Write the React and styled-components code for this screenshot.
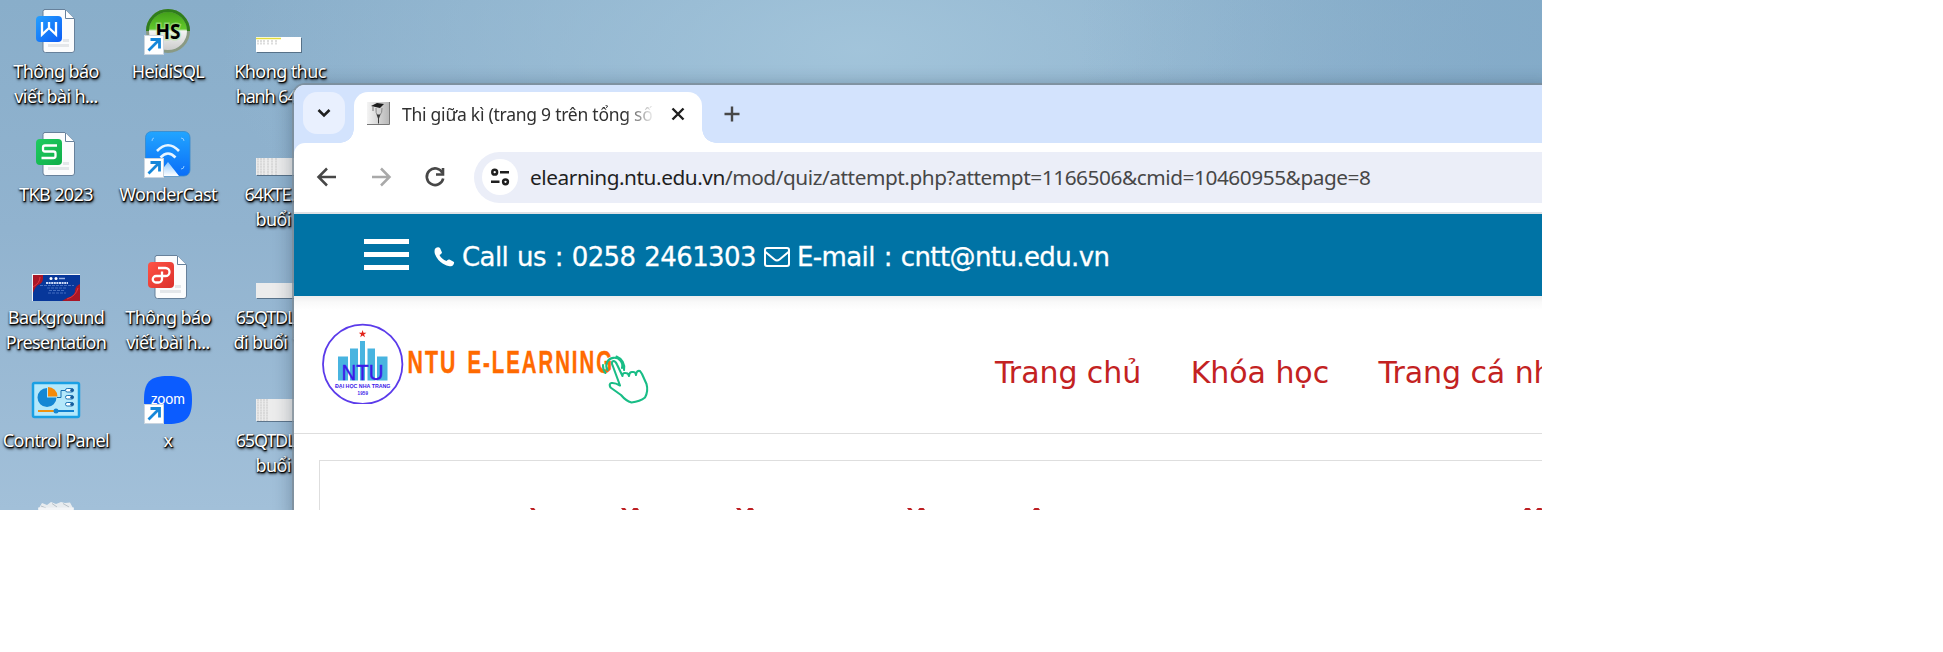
import React from 'react';
import styled, { createGlobalStyle } from 'styled-components';

const Global = createGlobalStyle`
  * { box-sizing: border-box; }
  body { margin: 0; background: #fff; font-family: "Noto Sans", "Open Sans", sans-serif; }
`;

const Desktop = styled.main`
  position: relative;
  width: 1542px;
  height: 510px;
  overflow: hidden;
  background:
    linear-gradient(90deg, rgba(130,170,200,0) 70%, rgba(130,170,200,.8) 100%),
    radial-gradient(ellipse 640px 280px at 860px 50px, rgba(163,197,219,.95), rgba(163,197,219,0)),
    linear-gradient(180deg, #89aeca 0, #91b3cf 45%, #a2c0d9 100%);
`;

const IconGrid = styled.div`
  display: grid;
  grid-template-columns: repeat(3, 112px);
  grid-template-rows: repeat(5, 123px);
`;

const Shortcut = styled.div`
  display: flex;
  flex-direction: column;
  align-items: center;
  padding-top: 6px;
  min-width: 0;
  svg { display: block; flex: none; overflow: visible; }
`;

const Label = styled.div`
  margin-top: 5px;
  color: #fff;
  font-size: 18px;
  line-height: 25px;
  letter-spacing: -0.6px;
  text-align: center;
  white-space: pre;
  text-shadow: 1px 1px 1px #000, 0 1px 2px #000, 1px 2px 3px rgba(0,0,0,.8);
`;

const LabelLine = styled.div`
  letter-spacing: ${(p) => (p.$tight ? -1.2 : -0.6)}px;
`;

const Browser = styled.section`
  position: absolute;
  left: 294px;
  top: 85px;
  width: 1260px;
  height: 440px;
  background: #fff;
  border-top-left-radius: 11px;
  box-shadow: 0 0 0 2px rgba(125,140,152,.75), 0 2px 20px rgba(20,40,60,.4);
`;

const TabStrip = styled.header`
  display: flex;
  height: 58px;
  padding: 7px 0 0 9px;
  background: #d3e3fd;
  border-top-left-radius: 11px;
`;

const TabSearch = styled.div`
  display: grid;
  place-items: center;
  width: 42px;
  height: 42px;
  border-radius: 14px;
  background: #e9f0fe;
`;

const Tab = styled.div`
  position: relative;
  display: flex;
  align-items: center;
  width: 348px;
  height: 51px;
  margin-left: 9px;
  padding: 0 15px 8px 13px;
  background: #fff;
  border-radius: 14px 14px 0 0;
  &::before, &::after {
    content: "";
    position: absolute;
    bottom: 0;
    width: 14px;
    height: 14px;
  }
  &::before { right: 100%; background: radial-gradient(circle at 0 0, transparent 13.5px, #fff 14px); }
  &::after { left: 100%; background: radial-gradient(circle at 100% 0, transparent 13.5px, #fff 14px); }
`;

const TabTitle = styled.span`
  width: 253px;
  margin: 1px 0 0 12px;
  overflow: hidden;
  white-space: nowrap;
  font-size: 17.5px;
  line-height: 28px;
  letter-spacing: -0.25px;
  color: #303030;
  mask-image: linear-gradient(90deg, #000 88%, transparent 100%);
`;

const CloseIcon = styled.svg`
  flex: none;
  margin-left: 16px;
`;

const NewTab = styled.div`
  margin: 13px 0 0 22px;
`;

const Toolbar = styled.div`
  display: flex;
  align-items: center;
  height: 71px;
  padding: 0 0 1px 19px;
  background: #fff;
  border-bottom: 2px solid #dfe1e5;
  border-top-left-radius: 11px;
`;

const ToolbarEdge = styled.div`
  background: #d3e3fd;
`;

const NavIcons = styled.div`
  display: flex;
  gap: 26px;
  width: 161px;
`;

const AddressBar = styled.div`
  display: flex;
  align-items: center;
  flex: 1;
  height: 51px;
  padding-left: 8px;
  border-radius: 26px 0 0 26px;
  background: #ebeef8;
`;

const SiteInfo = styled.div`
  display: grid;
  place-items: center;
  width: 36px;
  height: 36px;
  border-radius: 50%;
  background: #fff;
`;

const Url = styled.span`
  margin-left: 12px;
  white-space: nowrap;
  font-size: 20.8px;
  letter-spacing: -0.44px;
  color: #474747;
  b { font-weight: 400; color: #1f1f1f; }
`;

const ContactBar = styled.div`
  display: flex;
  align-items: center;
  height: 82px;
  padding-left: 70px;
  background: #0073a5;
  color: #fff;
  font-family: "DejaVu Sans", sans-serif;
  font-size: 26px;
  white-space: pre;
`;

const Burger = styled.div`
  display: flex;
  flex-direction: column;
  gap: 8px;
  width: 45px;
  margin: 0 25px 1px 0;
  i { height: 5px; background: #fff; }
`;

const Contact = styled.span`
  display: flex;
  align-items: center;
  margin-top: 3px;
  margin-right: ${(p) => p.$after ?? 0}px;
  letter-spacing: -0.6px;
  word-spacing: 1.2px;
  -webkit-text-stroke: 0.3px #fff;
  svg { margin-right: ${(p) => p.$iconGap}px; }
`;

const SiteHeader = styled.div`
  display: flex;
  height: 138px;
  border-bottom: 1px solid #dedede;
  background: linear-gradient(180deg, #ededed 0, #f9f9f9 6px, #fff 14px);
`;

const Logo = styled.svg`
  display: block;
  flex: none;
  margin: 24px 0 0 26px;
`;

const SiteNav = styled.nav`
  display: flex;
  margin: 59px 0 0 345px;
  gap: 49.5px;
  font-family: "DejaVu Sans", sans-serif;
  font-size: 30px;
  line-height: 36px;
  letter-spacing: -0.06px;
  color: #c32222;
  white-space: nowrap;
`;

const QuizCard = styled.div`
  margin: 26px 0 0 25px;
  height: 90px;
  border: 1px solid #dedede;
  svg { display: block; margin-top: 46px; }
`;

const Arrow = () => (
  <g>
    <rect x="0.500" y="26.500" width="19" height="19" fill="#fff" stroke="#cbd5df" strokeWidth="1" />
    <path d="M4.500 41.500 L15 31 M6.500 30.500 H15.500 V39.500" stroke="#1687d9" strokeWidth="2.800" fill="none" />
  </g>
);

const DocIcon = ({ color, id, light, children }) => (
  <svg width="48" height="48" viewBox="0 0 48 48">
    <defs>
      <linearGradient id={id} x1="0" y1="0" x2="1" y2="1">
        <stop offset="0" stopColor={light} /><stop offset="1" stopColor={color} />
      </linearGradient>
    </defs>
    <path d="M12 3.500 H33 L42.500 13 V44 a2.500 2.500 0 0 1 -2.500 2.500 H13.500 A2.500 2.500 0 0 1 11 44 V5.500 A2 2 0 0 1 13 3.500 Z" fill="#fbfcfd" stroke="#67819b" />
    <path d="M33.500 4 V12.500 H42" fill="#fff" stroke="#67819b" />
    <path d="M31 34.500 H37 M16 39.500 H37" stroke="#e4e7ea" strokeWidth="3" />
    <rect x="4" y="10" width="26" height="26" rx="4" fill={`url(#${id})`} />
    <g fill="none" stroke="#fff" strokeWidth="2.300">{children}</g>
  </svg>
);

const Writer = () => (
  <DocIcon id="wr" light="#24a0ff" color="#0c5cf5">
    <path d="M10 16 V28.500 L17 22 L24 28.500 V16 M17 16 V22" />
  </DocIcon>
);
const Sheet = () => (
  <DocIcon id="sh" light="#1fcb60" color="#0fae49">
    <path d="M25 16.500 H13 a2 2 0 0 0 -2 2 v2 a2 2 0 0 0 2 2 H21.500 a2 2 0 0 1 2 2 v2.500 a2 2 0 0 1 -2 2 H9.500" />
  </DocIcon>
);
const Pdf = () => (
  <DocIcon id="pd" light="#ff5346" color="#db302b">
    <path d="M14 16 H21.500 a4 4 0 0 1 0 8 H12 a3.200 3.200 0 0 0 0 6.500 H14.500 a3.500 3.500 0 0 0 3.500 -3.500 V19.500" />
  </DocIcon>
);

const Heidi = () => (
  <svg width="48" height="48" viewBox="0 0 48 48">
    <defs>
      <linearGradient id="hg" x1="0" y1="0" x2="0" y2="1">
        <stop offset="0" stopColor="#3f9c17" /><stop offset=".45" stopColor="#62c92c" />
        <stop offset=".5" stopColor="#f4f4f4" /><stop offset="1" stopColor="#c9c9c9" />
      </linearGradient>
    </defs>
    <circle cx="24" cy="25" r="20.500" fill="url(#hg)" stroke="#8a9a84" strokeWidth="3" />
    <path d="M3.500 25 a20.500 20.500 0 0 1 41 0" fill="none" stroke="#2f7e1c" strokeWidth="3" />
    <text x="24" y="32.500" textAnchor="middle" textLength="25" lengthAdjust="spacingAndGlyphs" fontFamily="Open Sans" fontWeight="700" fontSize="22" stroke="#b9e7a0" strokeWidth="3" paintOrder="stroke" strokeOpacity=".6">HS</text>
    <g transform="translate(0 3)"><Arrow /></g>
  </svg>
);

const Cast = () => (
  <svg width="48" height="48" viewBox="0 0 48 48">
    <defs>
      <linearGradient id="wc" x1="0" y1="0" x2="0" y2="1"><stop offset="0" stopColor="#22a5ff" /><stop offset="1" stopColor="#0a6ef8" /></linearGradient>
      <linearGradient id="wb" x1="0" y1="0" x2="0" y2="1"><stop offset="0" stopColor="#8cc8ff" /><stop offset="1" stopColor="#fff" /></linearGradient>
    </defs>
    <rect x="1.500" y="2.500" width="44.500" height="44.500" rx="6" fill="url(#wc)" stroke="#3589cc" strokeWidth=".8" />
    <path d="M24 33 L35 47 H13 Z" fill="url(#wb)" />
    <g fill="none" stroke="#e8f5ff" strokeWidth="2.600"><path d="M13 22 Q24 10.500 35 22" /><path d="M16.500 28.500 Q24 20.500 31.500 28.500" /></g>
    <path d="M8 12 q0 -3 2 -3 M37 9 q3 0 3 3 M37 40 q3 0 3 -3" stroke="#90ccff" fill="none" />
    <g transform="translate(0 3)"><Arrow /></g>
  </svg>
);

const Zoom = () => (
  <svg width="48" height="48" viewBox="0 0 48 48">
    <path d="M24 1 C42 1 48 7 48 25 S42 49 24 49 S0 43 0 25 S6 1 24 1 Z" fill="#0b5cff" />
    <text x="24" y="28.500" textAnchor="middle" textLength="34" lengthAdjust="spacingAndGlyphs" fontFamily="Lato" fontSize="14.500" fill="#fff">zoom</text>
    <g transform="translate(0 3)"><Arrow /></g>
  </svg>
);

const ControlPanel = () => (
  <svg width="48" height="48" viewBox="0 -1 48 48">
    <rect x="1" y="7" width="46" height="34" rx="1.500" fill="#b4e8fb" stroke="#1aa0e4" strokeWidth="2.500" />
    <path d="M15 12 A9.500 9.500 0 1 0 24.500 21.500 H15 Z" fill="#1487d4" />
    <path d="M16 11 a9.500 9.500 0 0 1 9.500 9.500 H16 Z" fill="#f58a0a" />
    <path d="M25 21.500 h4 v-7 h4" stroke="#176eb0" fill="none" />
    <g fill="#fff" stroke="#1b74b5"><rect x="33.500" y="12.500" width="8" height="3.500" rx="1.700" /><rect x="33.500" y="19.500" width="8" height="3.500" rx="1.700" /><rect x="33.500" y="26.500" width="8" height="3.500" rx="1.700" /></g>
    <g fill="#155c9c"><circle cx="40" cy="14.200" r="1.700" /><circle cx="40" cy="21.200" r="1.700" /><circle cx="40" cy="28.200" r="1.700" /></g>
    <path d="M6 35 H22" stroke="#ef910e" strokeWidth="2" /><path d="M25 35 H42" stroke="#1080d0" strokeWidth="2" />
    <circle cx="24" cy="35" r="2.500" fill="#1487d4" />
  </svg>
);

const Poster = () => (
  <svg width="48" height="48" viewBox="0 -4 48 48">
    <rect x="0" y="18" width="48" height="27" fill="#f2f4f8" />
    <rect x="1" y="19" width="47" height="26" fill="#07379a" />
    <path d="M1 19 h10 q1 8 -5 10 q-3 2 -5 8 Z M48 28 q-5 2 -5 7 t-8 7 l-5 3 H48 Z" fill="#a91626" />
    <path d="M8 21 q0 6 -7 10 M46 32 q-2 8 -11 11" stroke="#e13743" fill="none" />
    <circle cx="19" cy="22.500" r="1.500" fill="#fff" /><circle cx="24" cy="22.500" r="1.500" fill="#fff" />
    <path d="M27 22.500 h6" stroke="#9eb5e6" strokeWidth="1.500" />
    <path d="M14 27 h22" stroke="#cfdcf8" strokeWidth="2" strokeDasharray="2 .6" />
    <path d="M8 29.500 h34 M15 32 h20 M17 34.500 h16 M16 37 h18" stroke="#6f93dc" strokeWidth=".6" strokeDasharray="3 1" />
  </svg>
);

const Thumb = ({ y, h, yellow, cols = [2, 5, 8, 12, 16, 20] }) => (
  <svg width="48" height="48" viewBox="0 0 48 48">
    <rect x="1" y={y + 1} width="45" height={h} fill="rgba(50,70,90,.6)" />
    <rect x="0" y={y} width="45" height={h} fill={yellow ? '#fff' : '#ececec'} />
    {yellow && <path d={`M0 ${y + 1.500} H25`} stroke="#e3dc3c" strokeWidth="1.500" />}
    <path d={cols.map((x) => `M${x} ${y + (yellow ? 3 : 0)} V${y + (yellow ? 8 : h)}`).join(' ')} stroke="#d2d2d2" strokeWidth="1.500" strokeDasharray="2 .6" />
  </svg>
);

const Bin = () => (
  <svg width="48" height="48" viewBox="0 0 48 48">
    <path d="M7 10 L10 5 L15 7 L19 4 L24 6 L29 4 L33 5 L38 4.500 L41 10 V20 H7 Z" fill="#e8ecef" />
    <path d="M9 8 L14 10 M20 5.500 L25 9 M31 5.500 L37 9" stroke="#b8c1c8" fill="none" />
    <path d="M6 9.500 H42 L40 47 H8 Z" fill="#f5f7f8" opacity=".85" />
  </svg>
);

const shortcuts = [
  { Icon: Writer, lines: ['Thông báo', 'viết bài h...'] },
  { Icon: Heidi, lines: ['HeidiSQL'] },
  { Icon: () => <Thumb y={31} h={15} yellow />, lines: ['Khong thuc', 'hanh 64K.....'], tight: 1 },
  { Icon: Sheet, lines: ['TKB 2023'] },
  { Icon: Cast, lines: ['WonderCast'] },
  { Icon: () => <Thumb y={29} h={17} />, lines: ['64KTE.......', 'buổi 2'], tight: 0 },
  { Icon: Poster, lines: ['Background', 'Presentation'] },
  { Icon: Pdf, lines: ['Thông báo', 'viết bài h...'] },
  { Icon: () => <Thumb y={31} h={15} cols={[]} />, lines: ['65QTDL........', 'đi buổi 1......'], tight: 0 },
  { Icon: ControlPanel, lines: ['Control Panel'] },
  { Icon: Zoom, lines: ['x'] },
  { Icon: () => <Thumb y={24} h={22} cols={[2, 5, 8, 11]} />, lines: ['65QTDL........', 'buổi 2'], tight: 0 },
  { Icon: Bin, lines: [] },
];

const Favicon = () => (
  <svg width="23" height="23" viewBox="0 0 23 23">
    <defs><linearGradient id="fv"><stop offset="0" stopColor="#f4f4f4" /><stop offset="1" stopColor="#b8b8b8" /></linearGradient></defs>
    <path d="M0 22.500 H22.500 V0" fill="none" stroke="#777" />
    <rect width="22" height="22" fill="url(#fv)" />
    <path d="M4 4 L10 1 L17 2 L13 6 Z" fill="#1d1d1d" /><path d="M6 4 V9" stroke="#777" />
    <path d="M9 6 Q8.500 11 10.500 13.500 M15 6 Q15.500 11 12.500 13.500" stroke="#888" fill="none" />
    <path d="M9.500 12.500 h4 l-1.500 4 v5 h-1 v-5 Z" fill="#3a3a3a" />
  </svg>
);

const BrandLogo = () => (
  <Logo width="330" height="84" viewBox="320 320 330 84">
    <circle cx="362.700" cy="364.300" r="39.700" fill="#fff" stroke="#5b3bea" strokeWidth="1.800" />
    <path d="M362.600 330 l.9 2.700 h2.900 l-2.300 1.800 .9 2.800 -2.400 -1.700 -2.400 1.700 .9 -2.800 -2.300 -1.800 h2.900 Z" fill="#e2231a" />
    <path d="M338 356.500 h10 V380.500 h-10 Z M350 348.500 h8 V380.500 h-8 Z M360 341 h5 V380.500 h-5 Z M367.500 348.500 h7.500 V380.500 h-7.500 Z M377 356.500 h10.500 V380.500 h-10.500 Z" fill="#48b4e0" />
    <g fontFamily="Liberation Sans" fill="#3c19e8">
      <text x="341.500" y="380" fontSize="22" stroke="#3c19e8" strokeWidth=".4" textLength="42" lengthAdjust="spacingAndGlyphs">NTU</text>
      <text x="335" y="388" fontSize="5.500" fontWeight="700" textLength="55.500" lengthAdjust="spacingAndGlyphs">ĐẠI HỌC NHA TRANG</text>
      <text x="357.500" y="395" fontSize="4.500" fontWeight="700" textLength="10.500">1959</text>
    </g>
    <g fontFamily="Liberation Sans" fontWeight="700" fontSize="31" fill="#ff6a00" letterSpacing="3" stroke="#ff6a00" strokeWidth=".4">
      <text x="407.500" y="372.500" textLength="50" lengthAdjust="spacingAndGlyphs">NTU</text>
      <text x="467.500" y="372.500" textLength="146.500" lengthAdjust="spacingAndGlyphs">E-LEARNING</text>
    </g>
    <g fill="none" stroke="#19bd86" strokeWidth="2.100" strokeLinejoin="round" strokeLinecap="round">
      <path d="M613 366.500 Q610.500 361.500 613.500 361 Q615.500 361 617 364.500 L622.500 376 Q622.500 372.500 625.500 373 Q628.500 373 629 376 Q629.500 371.500 632.500 372 Q635.500 371.500 636 375 Q636.500 370 640 371 L642 374 L646.500 384 Q648.500 391 645 397.500 Q640 401.500 631.500 402.500 Q626 401 621 395 L610.500 387.500 Q608.500 383.500 611.500 383 Q615 382.500 620 385.500 Z" />
      <path d="M607.500 370 A8 8 0 1 1 622 368 M605.500 373 A12 12 0 0 1 603 365 M616.500 356.500 A12 12 0 0 1 624 370" />
    </g>
  </Logo>
);

export default function App() {
  return (
    <>
      <Global />
      <Desktop>
        <IconGrid>
          {shortcuts.map(({ Icon, lines, tight }, i) => (
            <Shortcut key={i}>
              <Icon />
              <Label>{lines.map((line, n) => <LabelLine key={n} $tight={tight === n}>{line}</LabelLine>)}</Label>
            </Shortcut>
          ))}
        </IconGrid>
        <Browser>
          <TabStrip>
            <TabSearch>
              <svg width="14" height="10" viewBox="0 0 14 10"><path d="M1.500 2 L7 7.500 L12.500 2" fill="none" stroke="#1f1f1f" strokeWidth="2.600" /></svg>
            </TabSearch>
            <Tab>
              <Favicon />
              <TabTitle>Thi giữa kì (trang 9 trên tổng số</TabTitle>
              <CloseIcon width="14" height="14" viewBox="0 0 14 14"><path d="M1.500 1.500 L12.500 12.500 M12.500 1.500 L1.500 12.500" stroke="#1f1f1f" strokeWidth="2.400" /></CloseIcon>
            </Tab>
            <NewTab>
              <svg width="16" height="16" viewBox="0 0 16 16"><path d="M8 .5 V15.500 M.5 8 H15.500" stroke="#474747" strokeWidth="2.400" /></svg>
            </NewTab>
          </TabStrip>
          <ToolbarEdge>
            <Toolbar>
              <NavIcons>
                <svg width="28" height="28" viewBox="0 0 28 28"><path d="M23 14 H6 M14 5.500 L5.500 14 L14 22.500" fill="none" stroke="#474747" strokeWidth="2.500" /></svg>
                <svg width="28" height="28" viewBox="0 0 28 28"><path d="M5 14 H22 M14 5.500 L22.500 14 L14 22.500" fill="none" stroke="#a9a9a9" strokeWidth="2.500" /></svg>
                <svg width="28" height="28" viewBox="0 0 28 28"><path d="M21.500 10 A8.300 8.300 0 1 0 22.200 15.500" fill="none" stroke="#474747" strokeWidth="2.600" /><path d="M22 5 V11.500 H15" fill="none" stroke="#474747" strokeWidth="2.600" /></svg>
              </NavIcons>
              <AddressBar>
                <SiteInfo>
                  <svg width="20" height="18" viewBox="0 0 20 18"><g fill="none" stroke="#1f1f1f" strokeWidth="2.500"><circle cx="4.700" cy="4.200" r="2.400" /><path d="M10 4.200 H19 M1 13.800 H9.500" /><circle cx="15.500" cy="13.800" r="2.400" /></g></svg>
                </SiteInfo>
                <Url><b>elearning.ntu.edu.vn</b>/mod/quiz/attempt.php?attempt=1166506&amp;cmid=10460955&amp;page=8</Url>
              </AddressBar>
            </Toolbar>
          </ToolbarEdge>
          <ContactBar>
            <Burger><i /><i /><i /></Burger>
            <Contact $after={8} $iconGap={7}>
              <svg width="21" height="20" viewBox="0 0 21 20"><path d="M1 1.800 Q4 -.7 6 1 L8 5.500 Q7.500 7 5.500 8 Q7.500 12 12.500 14 Q13.800 12 15.500 12.500 L20 15 Q20.500 17 18.500 18.700 Q14.500 20.500 9 16.800 Q3 13 .8 6.500 Q.2 4 1 1.800 Z" fill="#fff" /></svg>
              Call us : 0258 2461303
            </Contact>
            <Contact $iconGap={7}>
              <svg width="26" height="20" viewBox="0 0 26 20"><rect x="1" y="1" width="24" height="18" rx="2" fill="none" stroke="#fff" strokeWidth="2" /><path d="M1.500 5 L10.500 12.500 Q13 14.500 15.500 12.500 L24.500 5" fill="none" stroke="#fff" strokeWidth="2" /></svg>
              E-mail : cntt@ntu.edu.vn
            </Contact>
          </ContactBar>
          <SiteHeader>
            <BrandLogo />
            <SiteNav>
              <a>Trang chủ</a>
              <a>Khóa học</a>
              <a>Trang cá nhân</a>
            </SiteNav>
          </SiteHeader>
          <QuizCard>
            <svg width="1222" height="4" viewBox="320 507 1222 4">
              <g fill="#bd1f22">
                {[530, 621, 736, 907].map((x) => <path key={x} d={`M${x} 508 h4 l1.500 2 h-4 Z`} />)}
                {[632, 747, 918, 1033, 1524, 1536].map((x) => <path key={x} d={`M${x} 510 l1.500 -2 h4 l1.500 2 Z`} />)}
              </g>
            </svg>
          </QuizCard>
        </Browser>
      </Desktop>
    </>
  );
}
